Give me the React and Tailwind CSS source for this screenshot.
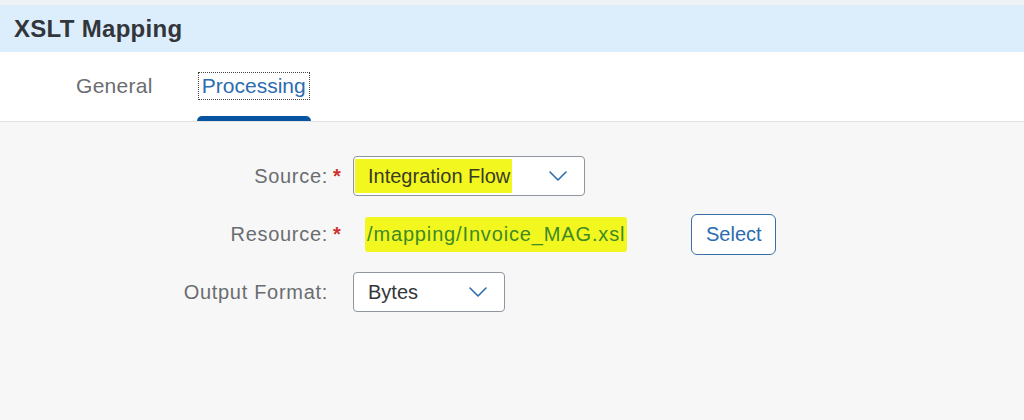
const Chevron = () => (
  <svg width="20" height="12" viewBox="0 0 20 12" fill="none">
    <path d="M2 2 L10 10 L18 2" stroke="#2b6cb0" strokeWidth="1.6" strokeLinecap="round" strokeLinejoin="round" />
  </svg>
);

const FormRow = ({ label, required, children }) => (
  <div className="flex items-center h-[40px]">
    <div className="w-[328px] text-right text-[20px] tracking-[0.7px] text-[#6a6d70]">{label}</div>
    <div className="w-[25px] pl-[5px] text-[20px] font-bold text-[#d0312d]">{required ? "*" : ""}</div>
    {children}
  </div>
);

const App = () => {
  return (
    <div className="w-[1024px] h-[420px] bg-[#f7f7f7] flex flex-col font-['Liberation_Sans',Arial,sans-serif]">
      <div className="h-[5px] bg-[#eef2f5]" />
      <div className="h-[47px] bg-[#dcedfc] flex items-center px-[14px]">
        <h1 className="text-[24px] font-bold text-[#32363a] tracking-[0.3px]">XSLT Mapping</h1>
      </div>

      <div className="h-[70px] bg-white border-b border-[#e2e2e2] flex items-stretch pl-[76px] gap-[44px]">
        <div className="flex items-center pb-[2px] text-[21px] tracking-[0.3px] text-[#6a6d70]">General</div>
        <div className="relative flex flex-col items-center justify-center px-[2px] pb-[2px]">
          <span className="text-[21px] text-[#2c6cb0] px-[3px] leading-[26px] outline-1 outline-dotted outline-[#444]">
            Processing
          </span>
          <div className="absolute left-0 right-0 bottom-0 h-[5px] rounded-t-full bg-[#0854a0]" />
        </div>
      </div>

      <div className="flex flex-col gap-[18px] pt-[34px]">
        <FormRow label="Source:" required>
          <div className="w-[232px] h-[40px] bg-white border border-[#8f969e] rounded-[4px] flex items-center justify-between pl-[1px] pr-[16px]">
            <span className="h-[34px] flex items-center bg-[#f3f720] pl-[13px] pr-[2px] text-[20px] text-[#3a3c22]">
              Integration Flow
            </span>
            <Chevron />
          </div>
        </FormRow>

        <FormRow label="Resource:" required>
          <span className="ml-[12px] h-[35px] flex items-center bg-[#f3f720] px-[2px] text-[20px] tracking-[0.85px] text-[#3d8a26] rounded-[3px]">
            /mapping/Invoice_MAG.xsl
          </span>
          <button className="ml-[64px] w-[85px] h-[41px] bg-white border border-[#3b6fa8] rounded-[6px] text-[20px] text-[#2c6cb0]">
            Select
          </button>
        </FormRow>

        <FormRow label="Output Format:">
          <div className="w-[152px] h-[40px] bg-white border border-[#8f969e] rounded-[4px] flex items-center justify-between pl-[14px] pr-[16px]">
            <span className="text-[20px] text-[#32363a]">Bytes</span>
            <Chevron />
          </div>
        </FormRow>
      </div>
    </div>
  );
};

export default App;
